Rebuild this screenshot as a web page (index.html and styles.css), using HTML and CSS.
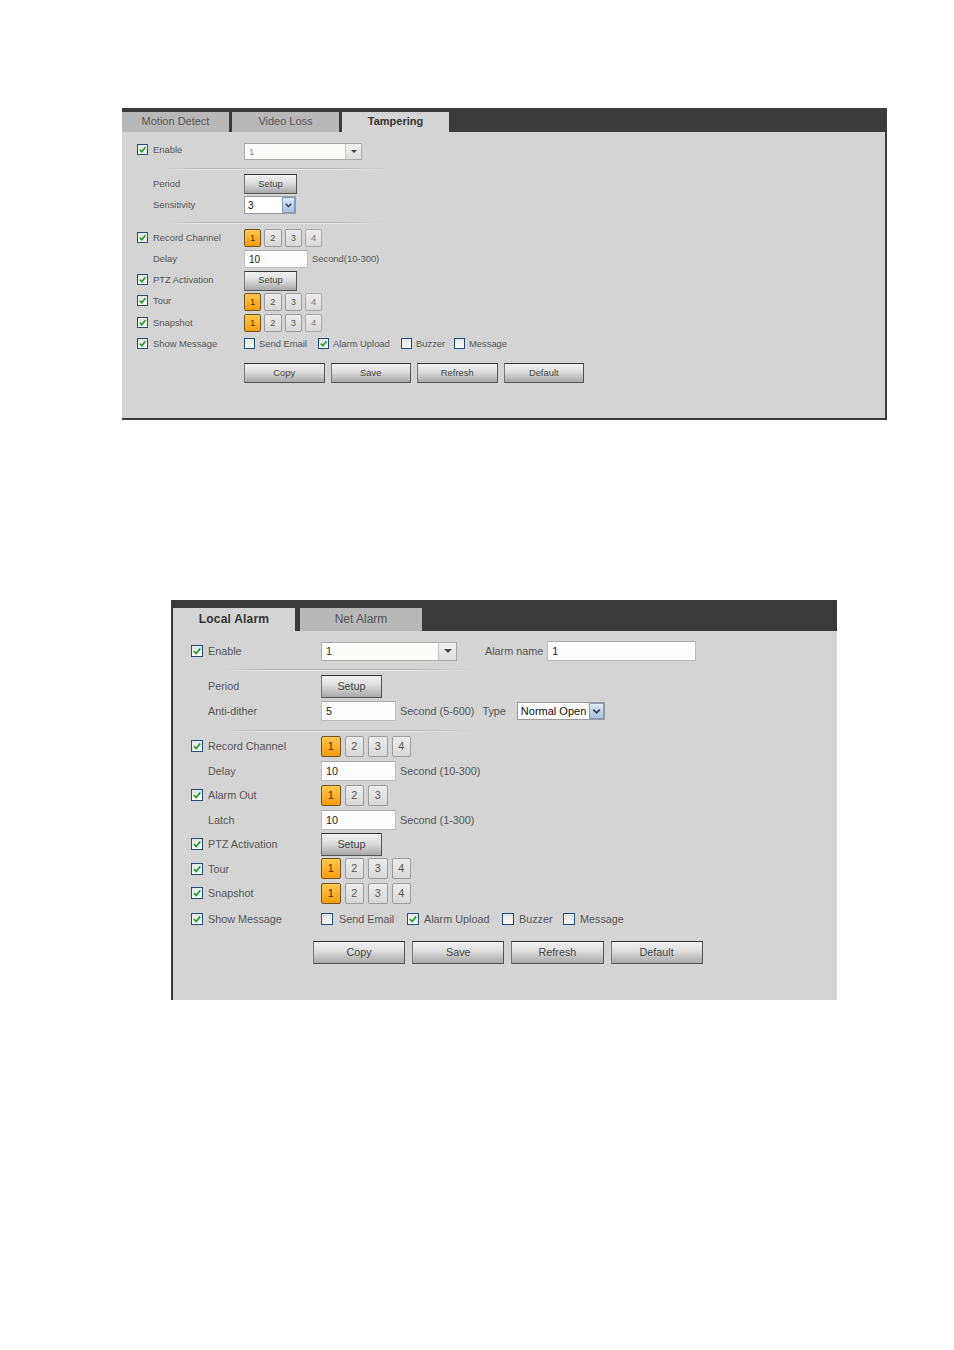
FILE: index.html
```html
<!DOCTYPE html>
<html lang="en">
<head>
  <meta charset="UTF-8">
  <title>Alarm settings</title>
  <link rel="stylesheet" href="styles.css">
</head>
<body>
  <svg class="defs" width="0" height="0">
    <symbol id="tick" viewBox="0 0 10 10"><path d="M2 5.2l2.2 2.3 4-5" fill="none" stroke="#1f9a2c" stroke-width="1.8"/></symbol>
    <symbol id="chevron" viewBox="0 0 10 10"><path d="M2.5 4l2.5 2.4L7.5 4" fill="none" stroke="#23405f" stroke-width="1.4"/></symbol>
  </svg>

  <!-- Tampering -->
  <section class="panel panel-small">
    <div class="tabs">
      <div class="tab">Motion Detect</div>
      <div class="tab">Video Loss</div>
      <div class="tab tab-active">Tampering</div>
    </div>
    <div class="form">
      <div class="row row-first">
        <label class="name"><span class="cb"><svg><use href="#tick"/></svg></span>Enable</label>
        <div class="combo combo-wide"><span>1</span><i class="combo-arrow"></i></div>
      </div>
      <div class="rule rule-1"></div>
      <div class="row">
        <label class="name name-plain">Period</label>
        <button class="btn btn-setup">Setup</button>
      </div>
      <div class="row">
        <label class="name name-plain">Sensitivity</label>
        <div class="select select-sens"><span>3</span><i class="select-arrow"><svg><use href="#chevron"/></svg></i></div>
      </div>
      <div class="rule rule-2"></div>
      <div class="row">
        <label class="name"><span class="cb"><svg><use href="#tick"/></svg></span>Record Channel</label>
        <div class="nums"><b class="num num-on">1</b><b class="num">2</b><b class="num">3</b><b class="num num-off">4</b></div>
      </div>
      <div class="row">
        <label class="name name-plain">Delay</label>
        <input class="field" value="10"><span class="hint">Second(10-300)</span>
      </div>
      <div class="row">
        <label class="name"><span class="cb"><svg><use href="#tick"/></svg></span>PTZ Activation</label>
        <button class="btn btn-setup">Setup</button>
      </div>
      <div class="row">
        <label class="name"><span class="cb"><svg><use href="#tick"/></svg></span>Tour</label>
        <div class="nums"><b class="num num-on">1</b><b class="num">2</b><b class="num">3</b><b class="num num-off">4</b></div>
      </div>
      <div class="row">
        <label class="name"><span class="cb"><svg><use href="#tick"/></svg></span>Snapshot</label>
        <div class="nums"><b class="num num-on">1</b><b class="num">2</b><b class="num">3</b><b class="num num-off">4</b></div>
      </div>
      <div class="row">
        <label class="name"><span class="cb"><svg><use href="#tick"/></svg></span>Show Message</label>
        <div class="checks">
          <label class="check check-email"><span class="cb cb-empty"></span>Send Email</label>
          <label class="check check-upload"><span class="cb"><svg><use href="#tick"/></svg></span>Alarm Upload</label>
          <label class="check check-buzzer"><span class="cb cb-empty"></span>Buzzer</label>
          <label class="check"><span class="cb cb-empty"></span>Message</label>
        </div>
      </div>
      <div class="actions">
        <button class="btn">Copy</button>
        <button class="btn">Save</button>
        <button class="btn">Refresh</button>
        <button class="btn">Default</button>
      </div>
    </div>
  </section>

  <!-- Local alarm -->
  <section class="panel panel-large">
    <div class="tabs">
      <div class="tab tab-active">Local Alarm</div>
      <div class="tab">Net Alarm</div>
    </div>
    <div class="form">
      <div class="row row-first">
        <label class="name"><span class="cb"><svg><use href="#tick"/></svg></span>Enable</label>
        <div class="combo combo-wide"><span>1</span><i class="combo-arrow"></i></div>
        <span class="alarm-name">Alarm name</span>
        <input class="field field-name" value="1">
      </div>
      <div class="rule rule-1"></div>
      <div class="row">
        <label class="name name-plain">Period</label>
        <button class="btn btn-setup">Setup</button>
      </div>
      <div class="row">
        <label class="name name-plain">Anti-dither</label>
        <input class="field" value="5"><span class="hint">Second (5-600)</span>
        <span class="type-label">Type</span>
        <div class="select select-type"><span>Normal Open</span><i class="select-arrow"><svg><use href="#chevron"/></svg></i></div>
      </div>
      <div class="rule rule-2"></div>
      <div class="row">
        <label class="name"><span class="cb"><svg><use href="#tick"/></svg></span>Record Channel</label>
        <div class="nums"><b class="num num-on">1</b><b class="num">2</b><b class="num">3</b><b class="num">4</b></div>
      </div>
      <div class="row">
        <label class="name name-plain">Delay</label>
        <input class="field" value="10"><span class="hint">Second (10-300)</span>
      </div>
      <div class="row">
        <label class="name"><span class="cb"><svg><use href="#tick"/></svg></span>Alarm Out</label>
        <div class="nums"><b class="num num-on">1</b><b class="num">2</b><b class="num">3</b></div>
      </div>
      <div class="row">
        <label class="name name-plain">Latch</label>
        <input class="field" value="10"><span class="hint">Second (1-300)</span>
      </div>
      <div class="row">
        <label class="name"><span class="cb"><svg><use href="#tick"/></svg></span>PTZ Activation</label>
        <button class="btn btn-setup">Setup</button>
      </div>
      <div class="row">
        <label class="name"><span class="cb"><svg><use href="#tick"/></svg></span>Tour</label>
        <div class="nums"><b class="num num-on">1</b><b class="num">2</b><b class="num">3</b><b class="num">4</b></div>
      </div>
      <div class="row">
        <label class="name"><span class="cb"><svg><use href="#tick"/></svg></span>Snapshot</label>
        <div class="nums"><b class="num num-on">1</b><b class="num">2</b><b class="num">3</b><b class="num">4</b></div>
      </div>
      <div class="row row-show">
        <label class="name"><span class="cb"><svg><use href="#tick"/></svg></span>Show Message</label>
        <div class="checks">
          <label class="check check-email"><span class="cb cb-empty"></span>Send Email</label>
          <label class="check check-upload"><span class="cb"><svg><use href="#tick"/></svg></span>Alarm Upload</label>
          <label class="check check-buzzer"><span class="cb cb-empty"></span>Buzzer</label>
          <label class="check"><span class="cb cb-empty"></span>Message</label>
        </div>
      </div>
      <div class="actions">
        <button class="btn">Copy</button>
        <button class="btn">Save</button>
        <button class="btn">Refresh</button>
        <button class="btn">Default</button>
      </div>
    </div>
  </section>
</body>
</html>
```

FILE: styles.css
```css
html,body{
  margin: 0;
  background: #fff;
}
body{
  height: 1350px;
  overflow: hidden;
  font-family: "Liberation Sans", Arial, sans-serif;
  color: #555;
}
.defs{
  position: absolute;
}
svg{
  display: block;
  width: 100%;
  height: 100%;
}

/* shared panel parts */
.panel{
  box-sizing: border-box;
  background: #d4d4d4;
}
.tabs{
  display: flex;
  align-items: flex-end;
  background: #3a3a3a;
}
.tab{
  text-align: center;
  background: #b8b8b8;
  color: #555;
}
.tab-active{
  background: #d4d4d4;
  color: #333;
  font-weight: bold;
}
.row{
  display: flex;
  align-items: center;
}
.name{
  display: flex;
  align-items: center;
  flex: none;
}
.cb{
  box-sizing: border-box;
  flex: none;
  display: block;
  border: 1px solid #1f4f7d;
  background: linear-gradient(#e4e4e0, #fbfbf8);
}
.rule{
  height: 2px;
  background: linear-gradient(#b8b8b8 50%, #e8e8e8 50%);
  mask-image: linear-gradient(90deg, transparent, #000 15%, #000 75%, transparent);
}
.btn{
  box-sizing: border-box;
  padding: 0;
  font: inherit;
  color: #444;
  border: 1px solid #555;
  border-top-color: #333;
  border-left-color: #777;
  background: linear-gradient(#f3f3f3, #dcdcdc 45%, #a9a9a9);
}
.field{
  box-sizing: border-box;
  font: inherit;
  color: #222;
  background: #fdfdfd;
  border: 1px solid #bdbdbd;
  border-top-color: #aaa;
  outline: none;
  padding: 0 0 0 4px;
}
.combo{
  box-sizing: border-box;
  display: flex;
  align-items: center;
  background: #fcfcfa;
  border: 1px solid #aaa;
  color: #333;
}
.combo span{
  flex: 1;
  padding-left: 4px;
}
.combo-arrow{
  position: relative;
  display: block;
  height: 100%;
  background: linear-gradient(#f2f2f2, #dedede);
  border-left: 1px solid #c8c8c8;
}
.combo-arrow::after{
  content: "";
  position: absolute;
  left: 50%;
  top: 50%;
  margin: -2px 0 0 -4px;
  border: 4px solid transparent;
  border-top-color: #444;
  border-bottom: 0;
}
.select{
  box-sizing: border-box;
  display: flex;
  align-items: center;
  background: #fff;
  color: #111;
  border: 1px solid #9a9a9a;
}
.select span{
  flex: 1;
  padding-left: 3px;
  white-space: nowrap;
}
.select-arrow{
  display: block;
  flex: none;
  height: 100%;
  box-sizing: border-box;
  background: linear-gradient(#dfe9f5, #a9bfdc);
  border: 1px solid #7f9dc0;
}
.nums{
  display: flex;
}
.num{
  box-sizing: border-box;
  display: block;
  text-align: center;
  font-weight: normal;
  color: #555;
  background: linear-gradient(#ececec, #d8d8d8);
  border: 1px solid #9c9c9c;
  border-radius: 2px;
}
.num-on{
  color: #4a2a00;
  background: linear-gradient(#ffc94f, #fb9c0c);
  border-color: #6d5326;
}
.num-off{
  color: #777;
  border-color: #aaa;
}
.checks{
  display: flex;
}
.check{
  display: flex;
  align-items: center;
  white-space: nowrap;
}
.hint{
  white-space: nowrap;
}
.actions{
  display: flex;
}

/* upper panel: tampering */
.panel-small{
  width: 765px;
  height: 312px;
  margin: 108px 0 0 122px;
  border-right: 2px solid #3a3a3a;
  border-bottom: 2px solid #3a3a3a;
  font-size: 9.4px;
}
.panel-small .tabs{
  height: 24px;
  gap: 3px;
}
.panel-small .tab{
  width: 107px;
  height: 20px;
  line-height: 19px;
  font-size: 11px;
}
.panel-small .form{
  padding: 7.4px 0 0 15px;
}
.panel-small .row{
  height: 21.25px;
}
.panel-small .name{
  width: 107px;
  padding-bottom: 2px;
}
.panel-small .name-plain{
  padding-left: 16px;
  box-sizing: border-box;
}
.panel-small .cb{
  width: 11px;
  height: 11px;
  margin-right: 5px;
}
.panel-small .rule{
  width: 225px;
  margin-left: 28px;
}
.panel-small .rule-1{
  margin-top: 7.4px;
  margin-bottom: 3.4px;
}
.panel-small .rule-2{
  margin-top: 5.6px;
  margin-bottom: 3.9px;
}
.panel-small .combo-wide{
  width: 118px;
  height: 17px;
  margin-top: 2px;
  color: #888;
}
.panel-small .combo-arrow{
  width: 15px;
}
.panel-small .combo-arrow::after{
  margin: -1px 0 0 -3px;
  border-width: 3px;
  border-bottom: 0;
}
.panel-small .btn-setup{
  width: 53px;
  height: 20px;
  padding-bottom: 2px;
}
.panel-small .select-sens{
  width: 52px;
  height: 18px;
  font-size: 10px;
}
.panel-small .select-arrow{
  width: 13px;
}
.panel-small .nums{
  gap: 3px;
}
.panel-small .num{
  width: 17.3px;
  height: 18px;
  line-height: 15px;
}
.panel-small .field{
  width: 64px;
  height: 18px;
  margin-right: 4px;
  font-size: 10px;
}
.panel-small .hint,
.panel-small .checks{
  padding-bottom: 1px;
}
.panel-small .check .cb{
  margin-right: 4px;
}
.panel-small .check-email{
  width: 74px;
}
.panel-small .check-upload{
  width: 83px;
}
.panel-small .check-buzzer{
  width: 53px;
}
.panel-small .actions{
  margin: 8px 0 0 107px;
  gap: 6px;
}
.panel-small .actions .btn{
  width: 80.5px;
  height: 20px;
}

/* lower panel: local alarm */
.panel-large{
  width: 666px;
  height: 400px;
  margin: 180px 0 0 171px;
  border-left: 2px solid #3a3a3a;
  font-size: 10.8px;
}
.panel-large .tabs{
  height: 31px;
  gap: 5px;
}
.panel-large .tab{
  width: 122px;
  height: 23px;
  line-height: 22px;
  font-size: 12px;
}
.panel-large .tab-active{
  letter-spacing: 0.2px;
}
.panel-large .form{
  padding: 7.75px 0 0 18px;
}
.panel-large .row{
  height: 24.5px;
}
.panel-large .row-show{
  margin-top: 1px;
}
.panel-large .name{
  width: 130px;
}
.panel-large .name-plain{
  padding-left: 17px;
  box-sizing: border-box;
}
.panel-large .cb{
  width: 12px;
  height: 12px;
  margin-right: 5px;
}
.panel-large .check-email .cb{
  margin-right: 6px;
}
.panel-large .rule{
  width: 250px;
  margin-left: 34px;
}
.panel-large .rule-1{
  margin-top: 5.25px;
  margin-bottom: 3.25px;
}
.panel-large .rule-2{
  margin-top: 6.75px;
  margin-bottom: 2.25px;
}
.panel-large .combo-wide{
  width: 136px;
  height: 19px;
}
.panel-large .combo-arrow{
  width: 17px;
}
.panel-large .alarm-name{
  margin: 0 4px 0 28px;
  white-space: nowrap;
}
.panel-large .field{
  width: 75px;
  height: 20px;
  margin-right: 4px;
}
.panel-large .field-name{
  width: 149px;
  margin: 0;
}
.panel-large .btn-setup{
  width: 61px;
  height: 23px;
}
.panel-large .type-label{
  margin: 0 11px 0 8px;
}
.panel-large .select-type{
  width: 88px;
  height: 18px;
  font-size: 11px;
}
.panel-large .select-arrow{
  width: 15px;
}
.panel-large .nums{
  gap: 4px;
}
.panel-large .num{
  width: 19.5px;
  height: 21px;
  line-height: 19px;
}
.panel-large .check-email{
  width: 86px;
}
.panel-large .check-upload{
  width: 95px;
}
.panel-large .check-buzzer{
  width: 61px;
}
.panel-large .actions{
  margin: 9.75px 0 0 122px;
  gap: 7px;
}
.panel-large .actions .btn{
  width: 92.2px;
  height: 23px;
}
```
